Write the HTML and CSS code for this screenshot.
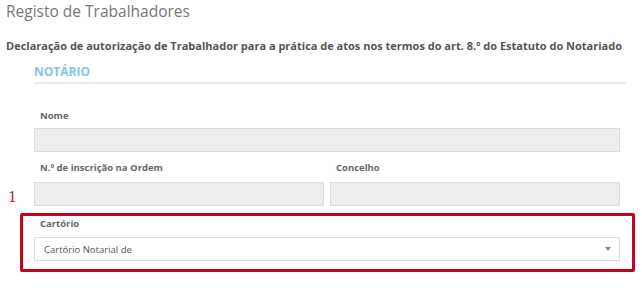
FILE: index.html
```html
<!DOCTYPE html>
<html lang="pt">
<head>
<meta charset="utf-8">
<link rel="stylesheet" href="styles.css">
</head>
<body>
<div class="page">
  <h1 class="title">Registo de Trabalhadores</h1>
  <p class="subtitle">Declaração de autorização de Trabalhador para a prática de atos nos termos do art. 8.º do Estatuto do Notariado</p>
  <section class="panel">
    <h2 class="panel-head">NOTÁRIO</h2>
    <div class="form">
      <div class="field">
        <label class="label">Nome</label>
        <div class="input"></div>
      </div>
      <div class="row">
        <div class="field">
          <label class="label">N.º de inscrição na Ordem</label>
          <div class="input"></div>
        </div>
        <div class="field">
          <label class="label">Concelho</label>
          <div class="input"></div>
        </div>
        <span class="marker">1</span>
      </div>
      <div class="highlight">
        <label class="label">Cartório</label>
        <div class="select">
          <span>Cartório Notarial de</span>
          <svg class="caret" width="6" height="4" viewBox="0 0 6 4"><path d="M0 0H6L3 4Z" fill="#8a8a8a"/></svg>
        </div>
      </div>
    </div>
  </section>
</div>
</body>
</html>
```
FILE: styles.css
```css
html, body {
  margin: 0;
  padding: 0;
  background: #ffffff;
}
.page {
  width: 642px;
  height: 288px;
  overflow: hidden;
  font-family: "Open Sans", "DejaVu Sans", sans-serif;
}
.title {
  margin: 0;
  padding: 1px 0 0 6px;
  font-size: 15.5px;
  line-height: 20px;
  font-weight: 400;
  color: #777777;
}
.subtitle {
  margin: 18px 0 0 6px;
  font-size: 11px;
  line-height: 14px;
  font-weight: 700;
  color: #555555;
  white-space: nowrap;
}
.panel {
  margin: 11px 0 0 34px;
  width: 592px;
}
.panel-head {
  margin: 0;
  font-size: 12px;
  line-height: 15px;
  font-weight: 700;
  color: #84c6e6;
  padding-bottom: 3px;
  border-bottom: 2px solid #ececec;
}
.form {
  width: 586px;
  padding-top: 25px;
}
.field {
  display: flex;
  flex-direction: column;
  flex: 1;
}
.label {
  display: block;
  font-size: 9.5px;
  line-height: 13px;
  font-weight: 700;
  color: #666666;
  padding-left: 6px;
  height: 19px;
}
.input {
  height: 22px;
  background: #ededed;
  border: 1px solid #dcdcdc;
}
.row {
  position: relative;
  display: flex;
  gap: 6px;
  margin-top: 9px;
}
.row .label {
  height: 21px;
}
.marker {
  position: absolute;
  left: -26px;
  top: 28px;
  font-family: "Liberation Serif", "DejaVu Serif", serif;
  font-size: 17px;
  line-height: 16px;
  color: #c0262c;
}
.highlight {
  margin: 7px -15px 0 -14px;
  border: 3px solid #c6001f;
  border-radius: 2px;
  padding: 1px 12px 8px 11px;
}
.highlight .label {
  height: 20px;
}
.select {
  height: 22px;
  border: 1px solid #dcdcdc;
  background: #ffffff;
  display: flex;
  align-items: center;
  justify-content: space-between;
  padding: 0 8px 0 9px;
  font-size: 9.5px;
  color: #555555;
}
.caret {
  display: block;
}
```
